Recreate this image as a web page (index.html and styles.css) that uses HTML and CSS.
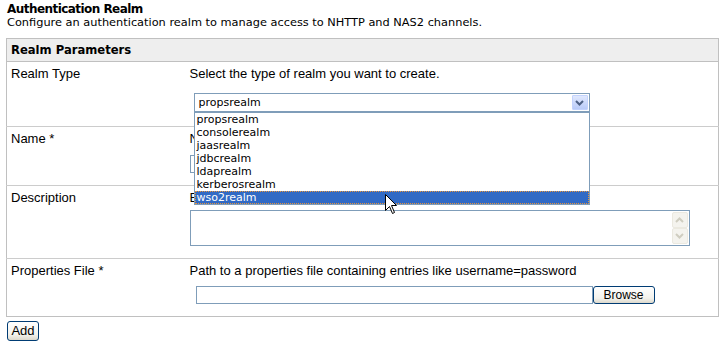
FILE: index.html
```html
<!DOCTYPE html>
<html>
<head>
<meta charset="utf-8">
<title>Authentication Realm</title>
<link rel="stylesheet" href="styles.css">
</head>
<body>
<h2 class="title">Authentication Realm</h2>
<p class="intro">Configure an authentication realm to manage access to NHTTP and NAS2 channels.</p>
<table class="realm">
  <thead>
    <tr><th colspan="2">Realm Parameters</th></tr>
  </thead>
  <tbody>
    <tr>
      <td class="lbl">Realm Type</td>
      <td class="val">
        <div class="help">Select the type of realm you want to create.</div>
        <div class="select select-type">
          <span class="select-text">propsrealm</span>
          <span class="select-btn"><svg width="9" height="6" viewBox="0 0 9 6"><polyline points="1,1 4.5,4.5 8,1" fill="none" stroke="#4d6185" stroke-width="2"/></svg></span>
          <ul class="dropdown">
            <li>propsrealm</li>
            <li>consolerealm</li>
            <li>jaasrealm</li>
            <li>jdbcrealm</li>
            <li>ldaprealm</li>
            <li>kerberosrealm</li>
            <li class="active">wso2realm
              <svg class="cursor" width="14" height="22" viewBox="0 0 14 22"><path d="M0.5 0.5 L0.5 16.5 L4.5 12.5 L7.5 19.5 L9.5 18.5 L6.5 11.5 L11.5 11.5 Z" fill="#fff" stroke="#000" stroke-width="1" stroke-linejoin="miter"/></svg>
            </li>
          </ul>
        </div>
      </td>
    </tr>
    <tr>
      <td class="lbl">Name *</td>
      <td class="val">
        <div class="help">Name of the realm</div>
        <div class="text name-input"></div>
      </td>
    </tr>
    <tr>
      <td class="lbl">Description</td>
      <td class="val">
        <div class="help">Enter a description</div>
        <div class="textarea">
          <div class="scroll">
            <span class="sbtn"><svg width="9" height="6" viewBox="0 0 9 6"><polyline points="1,5 4.5,1.5 8,5" fill="none" stroke="#cfcdc0" stroke-width="2"/></svg></span>
            <span class="sbtn"><svg width="9" height="6" viewBox="0 0 9 6"><polyline points="1,1 4.5,4.5 8,1" fill="none" stroke="#cfcdc0" stroke-width="2"/></svg></span>
          </div>
        </div>
      </td>
    </tr>
    <tr>
      <td class="lbl">Properties File *</td>
      <td class="val">
        <div class="help">Path to a properties file containing entries like username=password</div>
        <div class="file-row">
          <div class="text file-input"></div>
          <button class="btn browse" type="button">Browse</button>
        </div>
      </td>
    </tr>
  </tbody>
</table>
<button class="btn add" type="button">Add</button>
</body>
</html>
```

FILE: styles.css
```css
* { box-sizing: border-box; }

body {
  margin: 0;
  padding: 0 0 0 6px;
  background: #fff;
  color: #000;
  font-family: "DejaVu Sans", Verdana, sans-serif;
  font-size: 11px;
}

.title {
  margin: 0;
  padding: 2px 0 0 1px;
  font-size: 12px;
  letter-spacing: -0.55px;
  line-height: 14px;
  font-weight: bold;
}

.intro {
  margin: 0;
  padding-left: 1px;
  font-size: 11.35px;
  line-height: 13px;
}

.realm {
  margin-top: 9px;
  width: 713px;
  border-collapse: collapse;
  border: 1px solid #c0c0c0;
}

.realm th {
  height: 23px;
  padding: 0 4px;
  background: #eeeeee;
  text-align: left;
  font-family: "DejaVu Sans", Verdana, sans-serif;
  font-size: 11.6px;
  font-weight: bold;
  border-bottom: 1px solid #c0c0c0;
}

.realm td {
  vertical-align: top;
  padding: 4px 5px 12px 5px;
  font-family: "Liberation Sans", Arial, sans-serif;
  font-size: 13px;
  line-height: 16px;
  border-top: 1px solid #cccccc;
}

.realm td.lbl {
  width: 178px;
  padding-left: 4px;
}

.realm td.val {
  padding-left: 5px;
}

.help {
  white-space: nowrap;
}

.select {
  position: relative;
  display: flex;
  align-items: center;
  margin: 11px 0 2px 4px;
  width: 396px;
  height: 19px;
  border: 1px solid #7f9db9;
  background: #fff;
  padding: 0 1px 0 4px;
  font-family: "DejaVu Sans", Verdana, sans-serif;
  font-size: 11px;
}

.select-text {
  flex: 1;
  line-height: 17px;
}

.select-btn {
  display: flex;
  align-items: center;
  justify-content: center;
  width: 16px;
  height: 15px;
  border: 1px solid #c3d3fd;
  border-radius: 1px;
  background: linear-gradient(#e0e8fe, #b9cbf8);
}

.dropdown {
  position: absolute;
  top: 18px;
  left: -1px;
  width: 396px;
  margin: 0;
  padding: 0;
  list-style: none;
  background: #fff;
  border: 1px solid #7f9db9;
  z-index: 5;
}

.dropdown li {
  height: 13px;
  line-height: 13px;
  padding-left: 2px;
  white-space: nowrap;
}

.dropdown li.active {
  position: relative;
  background: #316ac5;
  color: #fff;
  outline: 1px dotted #e8953c;
  outline-offset: -1px;
}

.cursor {
  position: absolute;
  left: 190px;
  top: 3px;
}

.text {
  height: 18px;
  border: 1px solid #7f9db9;
  background: #fff;
}

.name-input {
  margin-top: 8px;
  width: 300px;
}

.textarea {
  display: flex;
  justify-content: flex-end;
  margin-top: 4px;
  width: 500px;
  height: 36px;
  border: 1px solid #7f9db9;
  padding: 1px;
}

.scroll {
  display: flex;
  flex-direction: column;
  width: 16px;
}

.sbtn {
  display: flex;
  align-items: center;
  justify-content: center;
  height: 16px;
  border: 1px solid #ebe9e0;
  border-radius: 2px;
  background: #f4f3ee;
}

.file-row {
  display: flex;
  margin: 7px 0 0 6px;
}

.file-input {
  width: 397px;
}

.btn {
  display: block;
  margin: 0;
  padding: 0;
  border: 1px solid #003c74;
  border-radius: 3px;
  background: linear-gradient(#ffffff, #f3f2ec 70%, #dcd8cc);
  color: #000;
  font-family: "Liberation Sans", Arial, sans-serif;
  cursor: default;
}

.browse {
  width: 62px;
  height: 18px;
  font-size: 12px;
  line-height: 16px;
}

.add {
  margin: 4px 0 0 1px;
  width: 32px;
  height: 20px;
  font-size: 13px;
  line-height: 18px;
}
```
